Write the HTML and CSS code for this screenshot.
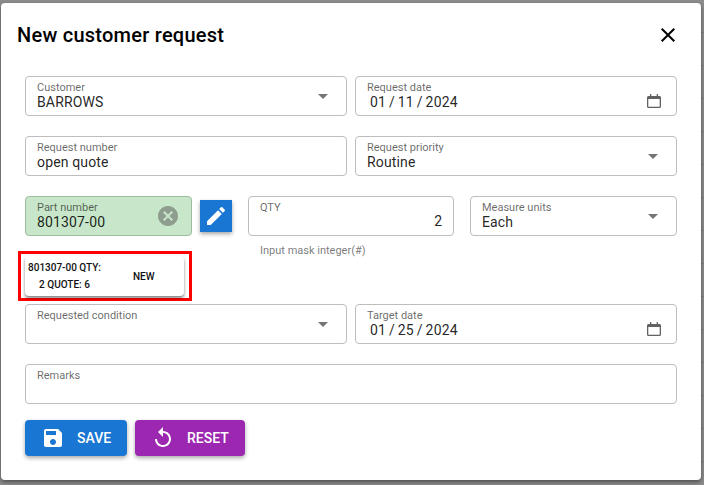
FILE: index.html
```html
<!DOCTYPE html>
<html lang="en">
<head>
<meta charset="utf-8">
<title>New customer request</title>
<link rel="stylesheet" href="styles.css">
</head>
<body>
<div class="dialog">
  <header class="head">
    <h1 class="title">New customer request</h1>
    <svg class="close" viewBox="0 0 24 24"><path d="M19 6.41 17.59 5 12 10.59 6.41 5 5 6.41 10.59 12 5 17.59 6.41 19 12 13.41 17.59 19 19 17.59 13.41 12z"/></svg>
  </header>
  <div class="form">
    <div class="row two">
      <div class="field"><div class="text"><span class="label">Customer</span><span class="value">BARROWS</span></div><svg class="arrow" viewBox="0 0 24 24"><path d="M7 10l5 5 5-5z"/></svg></div>
      <div class="field"><div class="text"><span class="label">Request date</span><span class="value date">01 / 11 / 2024</span></div><svg class="cal" viewBox="0 0 14 14"><path fill-rule="evenodd" d="M3 0h1.300v2h5.400V0H11v2h1.500A1.500 1.500 0 0 1 14 3.500v9a1.500 1.500 0 0 1-1.500 1.500h-11A1.500 1.500 0 0 1 0 12.500v-9A1.500 1.500 0 0 1 1.500 2H3zM1.300 5v7.700h11.400V5z"/></svg></div>
    </div>
    <div class="row two">
      <div class="field"><div class="text"><span class="label">Request number</span><span class="value">open quote</span></div></div>
      <div class="field"><div class="text"><span class="label">Request priority</span><span class="value">Routine</span></div><svg class="arrow" viewBox="0 0 24 24"><path d="M7 10l5 5 5-5z"/></svg></div>
    </div>
    <div class="part-block">
      <div class="part-col">
        <div class="part-line">
          <div class="field part"><div class="text"><span class="label">Part number</span><span class="value">801307-00</span></div><svg class="clear" viewBox="0 0 24 24"><path d="M12 2C6.470 2 2 6.470 2 12s4.470 10 10 10 10-4.470 10-10S17.530 2 12 2zm5 13.590L15.590 17 12 13.410 8.410 17 7 15.590 10.590 12 7 8.410 8.410 7 12 10.590 15.590 7 17 8.410 13.410 12 17 15.590z"/></svg></div>
          <div class="edit"><svg viewBox="0 0 24 24"><path d="M3 17.250V21h3.750L17.810 9.940l-3.750-3.750L3 17.250zM20.710 7.040a1 1 0 0 0 0-1.410l-2.340-2.340a1 1 0 0 0-1.410 0l-1.830 1.830 3.750 3.750 1.830-1.830z"/></svg></div>
        </div>
        <div class="highlight">
          <div class="card"><span class="card-name">801307-00 QTY: 2 QUOTE: 6</span><span class="card-state">NEW</span></div>
        </div>
      </div>
      <div class="qty-col">
        <div class="field qty"><span class="label">QTY</span><span class="qty-value">2</span></div>
        <p class="hint">Input mask integer(#)</p>
      </div>
      <div class="field units"><div class="text"><span class="label">Measure units</span><span class="value">Each</span></div><svg class="arrow" viewBox="0 0 24 24"><path d="M7 10l5 5 5-5z"/></svg></div>
    </div>
    <div class="row two">
      <div class="field"><div class="text"><span class="label">Requested condition</span><span class="value">&nbsp;</span></div><svg class="arrow" viewBox="0 0 24 24"><path d="M7 10l5 5 5-5z"/></svg></div>
      <div class="field"><div class="text"><span class="label">Target date</span><span class="value date">01 / 25 / 2024</span></div><svg class="cal" viewBox="0 0 14 14"><path fill-rule="evenodd" d="M3 0h1.300v2h5.400V0H11v2h1.500A1.500 1.500 0 0 1 14 3.500v9a1.500 1.500 0 0 1-1.500 1.500h-11A1.500 1.500 0 0 1 0 12.500v-9A1.500 1.500 0 0 1 1.500 2H3zM1.300 5v7.700h11.400V5z"/></svg></div>
    </div>
    <div class="field remarks"><div class="text"><span class="label">Remarks</span><span class="value">&nbsp;</span></div></div>
    <div class="actions">
      <div class="btn save"><svg viewBox="0 0 24 24"><path d="M17 3H5c-1.110 0-2 .9-2 2v14c0 1.100.89 2 2 2h14c1.100 0 2-.9 2-2V7l-4-4zm-5 16c-1.660 0-3-1.340-3-3s1.340-3 3-3 3 1.340 3 3-1.340 3-3 3zm3-10H5V5h10v4z"/></svg><span>SAVE</span></div>
      <div class="btn reset"><svg viewBox="0 0 24 24"><path d="M12 5V1L7 6l5 5V7c3.310 0 6 2.690 6 6s-2.690 6-6 6-6-2.690-6-6H4c0 4.420 3.580 8 8 8s8-3.580 8-8-3.580-8-8-8z"/></svg><span>RESET</span></div>
    </div>
  </div>
</div>
</body>
</html>
```
FILE: styles.css
```css
* { box-sizing: border-box; }
html, body { margin: 0; height: 485px; overflow: hidden; }
body {
  background: repeating-linear-gradient(180deg, #8c8c8c 0, #8c8c8c 32px, #7e7e7e 32px, #7e7e7e 33px);
  font-family: Roboto, "Liberation Sans", sans-serif;
  color: rgba(0, 0, 0, 0.87);
  padding: 3px 3px 5px 1px;
}
.dialog {
  width: 700px;
  height: 477px;
  background: #fff;
  border-radius: 4px;
  box-shadow: 0 2px 4px rgba(0, 0, 0, 0.45);
}
.head {
  height: 73px;
  padding: 16px 21px 0 16px;
  display: flex;
  justify-content: space-between;
}
.title {
  margin: 0;
  font-size: 20px;
  font-weight: 500;
  line-height: 32px;
  letter-spacing: 0.25px;
  color: #000;
}
.close { width: 24px; height: 24px; margin-top: 4px; fill: #000; }
.form {
  padding: 0 24px;
  display: flex;
  flex-direction: column;
  gap: 20px;
}
.row.two { display: grid; grid-template-columns: 322px 322px; gap: 8px; }
.field {
  height: 40px;
  border: 1px solid #bdbdbd;
  border-radius: 4px;
  padding: 4px 11px;
  display: flex;
  align-items: flex-start;
  justify-content: space-between;
  position: relative;
}
.text { display: flex; flex-direction: column; min-width: 0; }
.label {
  font-size: 11px;
  line-height: 13px;
  color: rgba(0, 0, 0, 0.6);
  display: block;
  white-space: nowrap;
}
.value { font-size: 14px; line-height: 17px; letter-spacing: 0.15px; display: block; white-space: nowrap; }
.date { padding-left: 3px; word-spacing: -0.7px; }
.arrow { width: 24px; height: 24px; fill: #757575; margin: 3px 0 0 0; flex: none; }
.cal { width: 14px; height: 14px; fill: #616161; margin: 13px 4px 0 0; flex: none; }
.part-block { display: flex; align-items: flex-start; height: 108px; margin-bottom: -20px; }
.part-col { width: 207px; flex: none; }
.part-line { display: flex; gap: 8px; align-items: center; height: 40px; }
.part { width: 167px; background: #c8e6c9; border-color: #9dbd9f; flex: none; }
.clear { width: 24px; height: 24px; fill: #8d9e8e; margin: 3px 0 0 0; flex: none; }
.edit {
  width: 32px;
  height: 32px;
  background: #1976d2;
  display: flex;
  align-items: center;
  justify-content: center;
  box-shadow: 0 2px 4px rgba(0, 0, 0, 0.35);
}
.edit svg { width: 24px; height: 24px; fill: #fff; }
.highlight {
  width: 174px;
  margin: 15px 0 0 -7px;
  border: 3px solid #f00;
  padding: 2px 4px;
}
.card {
  height: 40px;
  width: 159px;
  background: #fff;
  border-radius: 4px;
  box-shadow: 0 2px 3px rgba(0, 0, 0, 0.5);
  display: flex;
  align-items: center;
  font-size: 10px;
  font-weight: 500;
  line-height: 17px;
  color: #111;
}
.card-name { width: 79px; text-align: center; }
.card-state { margin-left: 29px; }
.qty-col { width: 206px; margin-left: 16px; flex: none; }
.qty { display: block; }
.qty-value { position: absolute; right: 11px; top: 16px; font-size: 14px; line-height: 17px; }
.hint {
  margin: 8px 0 0 12px;
  font-size: 11px;
  line-height: 13px;
  color: rgba(0, 0, 0, 0.55);
}
.units { width: 207px; margin-left: 16px; flex: none; }
.actions { display: flex; gap: 8px; margin-top: -4px; }
.btn {
  height: 36px;
  border-radius: 4px;
  color: #fff;
  font-size: 14px;
  font-weight: 500;
  display: flex;
  align-items: center;
  box-shadow: 0 2px 4px rgba(0, 0, 0, 0.35);
}
.btn svg { width: 24px; height: 24px; fill: #fff; flex: none; }
.save { width: 102px; background: #1976d2; padding-left: 16px; gap: 12px; }
.reset { width: 110px; background: #9c27b0; padding-left: 16px; gap: 12px; }
```
